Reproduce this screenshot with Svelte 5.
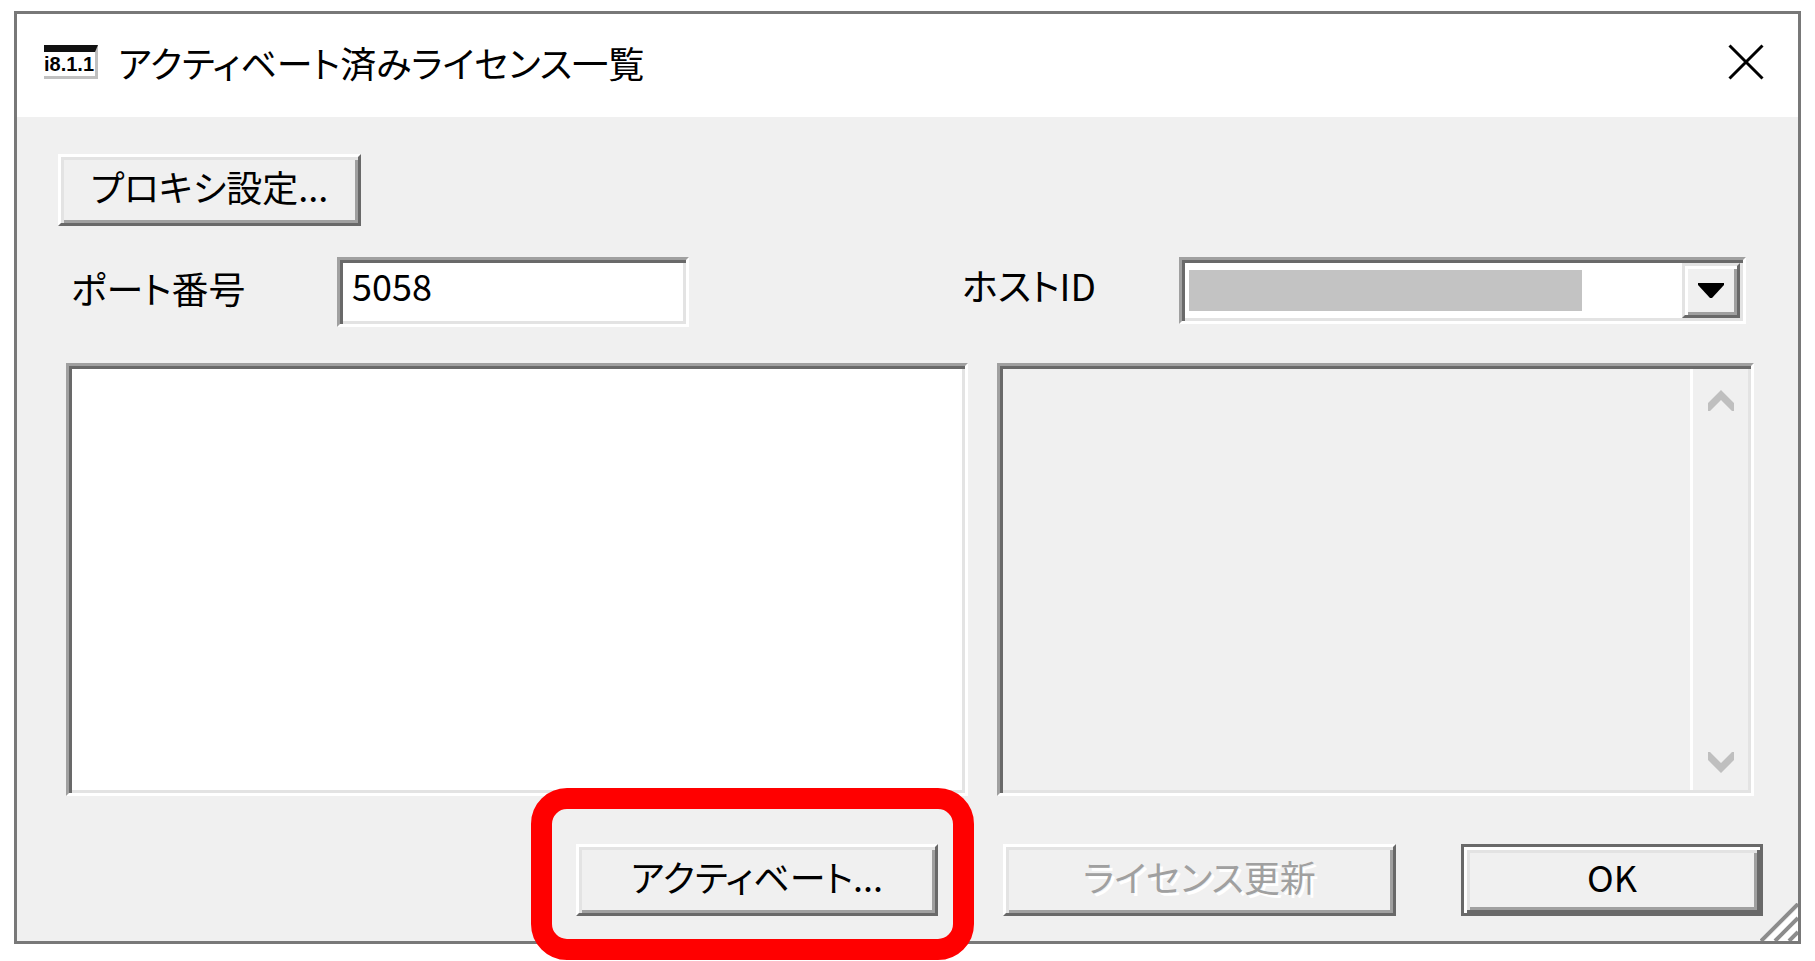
<script lang="ts">
    let port = "5058"
    let hostId = ""
    let details = ""
    const hostIds: string[] = [""]
</script>

<main class="window">
    <header class="titleBar">
        <span class="appIcon">i8.1.1</span>
        <h1>アクティベート済みライセンス一覧</h1>
        <button class="close" aria-label="閉じる">
            <svg viewBox="0 0 36 36" width="36" height="36">
                <path d="M1.5 1.5 L34.5 34.5 M34.5 1.5 L1.5 34.5" stroke="#000" stroke-width="3" fill="none" />
            </svg>
        </button>
    </header>

    <div class="content">
        <div class="toolbar">
            <button class="push proxy">プロキシ設定...</button>
        </div>

        <div class="fields">
            <label for="port">ポート番号</label>
            <input id="port" class="sunken" type="text" bind:value={port}>
            <label class="hostLabel" for="host">ホストID</label>
            <div class="combo sunken">
                <select id="host" bind:value={hostId}>
                    {#each hostIds as id}
                        <option value={id}>{id}</option>
                    {/each}
                </select>
                <span class="mask"></span>
                <span class="drop">
                    <svg viewBox="0 0 26 15" width="26" height="15">
                        <path d="M0 0 H26 V2 L14 15 H12 L0 2 Z" fill="#000" />
                    </svg>
                </span>
            </div>
        </div>

        <div class="panels">
            <div class="list sunken" role="listbox" aria-label="ライセンス"></div>
            <div class="details sunken">
                <textarea aria-label="詳細" disabled bind:value={details}></textarea>
                <div class="scrollbar">
                    <button disabled aria-label="上へ">
                        <svg viewBox="0 0 26 21" width="26" height="21">
                            <path d="M0 13 L13 0 L26 13 V21 H24 L13 10 L2 21 H0 Z" fill="#bfbfbf" />
                        </svg>
                    </button>
                    <button disabled aria-label="下へ">
                        <svg viewBox="0 0 26 21" width="26" height="21">
                            <path d="M0 8 L13 21 L26 8 V0 H24 L13 11 L2 0 H0 Z" fill="#bfbfbf" />
                        </svg>
                    </button>
                </div>
            </div>
        </div>

        <footer class="actions">
            <div class="highlight">
                <button class="push activate">アクティベート...</button>
            </div>
            <button class="push update" disabled>ライセンス更新</button>
            <button class="push ok">OK</button>
        </footer>
    </div>

    <svg class="grip" viewBox="0 0 38 38" width="38" height="38">
        <path d="M5 38 L38 5 V38 Z" fill="#fff" />
        <path d="M1 38 L38 1 M15 38 L38 15 M29 38 L38 29" stroke="#8c8c8c" stroke-width="4" fill="none" />
    </svg>
</main>

<style>
    :global(body) {
        margin: 0;
        background: #fff;
    }
    .window {
        position: relative;
        display: flex;
        flex-direction: column;
        box-sizing: border-box;
        min-height: calc(100vh - 28px);
        margin: 11px 14px 17px;
        border: 3px solid #787878;
        background: #f0f0f0;
        color: #000;
        font-family: "Noto Sans CJK JP", sans-serif;
        font-size: 36px;
        font-feature-settings: "palt";
    }
    button, input, select, textarea {
        box-sizing: border-box;
        margin: 0;
        padding: 0;
        border: 0;
        border-radius: 0;
        background: none;
        color: inherit;
        font: inherit;
        font-feature-settings: inherit;
    }

    .titleBar {
        display: flex;
        align-items: center;
        height: 103px;
        padding: 0 34px 8px 27px;
        box-sizing: border-box;
        background: #fff;
    }
    .appIcon {
        box-sizing: border-box;
        width: 54px;
        height: 34px;
        border-top: 7px solid #111;
        border-right: 3px solid #c0c0c0;
        border-bottom: 3px solid #c0c0c0;
        font-family: "Liberation Sans", sans-serif;
        font-size: 20px;
        font-weight: bold;
        line-height: 24px;
        white-space: nowrap;
    }
    h1 {
        margin: 0 auto 0 20px;
        font-size: 36px;
        font-weight: 400;
        line-height: 48px;
    }
    .close {
        display: flex;
    }

    .content {
        flex: 1;
        display: flex;
        flex-direction: column;
        padding: 37px 35px 25px 41px;
    }
    .push {
        height: 72px;
        padding-bottom: 8px;
        border: 3px solid;
        border-color: #fff #696969 #696969 #fff;
        box-shadow: inset 3px 3px #e3e3e3, inset -3px -3px #a0a0a0;
        line-height: 48px;
        white-space: nowrap;
    }
    .push:disabled {
        color: #a0a0a0;
        text-shadow: 3px 3px #fff;
    }
    .sunken {
        box-sizing: border-box;
        border: 3px solid;
        border-color: #a0a0a0 #fff #fff #a0a0a0;
        box-shadow: inset 3px 3px #696969, inset -3px -3px #e3e3e3;
    }
    .proxy {
        width: 303px;
    }

    .fields {
        display: grid;
        grid-template-columns: 266fr 352fr 273fr 217fr 567fr;
        align-items: start;
        margin-top: 31px;
        padding: 0 17px 0 13px;
    }
    .fields label {
        font-size: 37px;
        line-height: 62px;
        white-space: nowrap;
    }
    .fields .hostLabel {
        grid-column: 4;
        line-height: 56px;
    }
    .fields input {
        width: 100%;
        height: 70px;
        padding: 0 12px 14px;
        background: #fff;
    }
    .combo {
        display: grid;
        grid-template-columns: 1fr 58px;
        height: 67px;
        padding: 3px;
        background: #fff;
    }
    .combo select {
        grid-area: 1 / 1 / 2 / 3;
        width: 100%;
        height: 100%;
        appearance: none;
    }
    .mask {
        grid-area: 1 / 1;
        width: 79%;
        margin: 7px 4px;
        background: #c3c3c3;
        pointer-events: none;
    }
    .drop {
        grid-area: 1 / 2;
        display: flex;
        align-items: center;
        justify-content: center;
        border: 3px solid;
        border-color: #e3e3e3 #696969 #696969 #e3e3e3;
        background: #f0f0f0;
        box-shadow: inset 3px 3px #fff, inset -3px -3px #a0a0a0;
        pointer-events: none;
    }

    .panels {
        flex: 1;
        display: grid;
        grid-template-columns: 902fr 757fr;
        gap: 29px;
        min-height: 240px;
        margin-top: 36px;
        padding: 0 9px 0 8px;
    }
    .list {
        background: #fff;
    }
    .details {
        display: flex;
        padding: 3px;
    }
    .details textarea {
        flex: 1;
        min-width: 0;
        resize: none;
    }
    .scrollbar {
        display: flex;
        flex-direction: column;
        justify-content: space-between;
        width: 58px;
        box-sizing: border-box;
        padding: 21px 0 17px;
        border-left: 3px solid #fff;
    }
    .scrollbar button {
        display: flex;
        justify-content: center;
    }

    .actions {
        display: flex;
        justify-content: flex-end;
        gap: 65px;
        margin-top: 48px;
    }
    .highlight {
        position: relative;
    }
    .highlight::after {
        content: "";
        position: absolute;
        inset: -56px -36px -44px -45px;
        border: 21px solid #f00;
        border-radius: 36px;
        pointer-events: none;
    }
    .activate {
        width: 362px;
    }
    .update {
        width: 393px;
    }
    .ok {
        width: 302px;
        border-color: #696969;
        box-shadow: inset 3px 3px #fff, inset -3px -3px #696969, inset 6px 6px #e3e3e3, inset -6px -6px #a0a0a0;
    }
    .grip {
        position: absolute;
        right: 0;
        bottom: 0;
    }
</style>
